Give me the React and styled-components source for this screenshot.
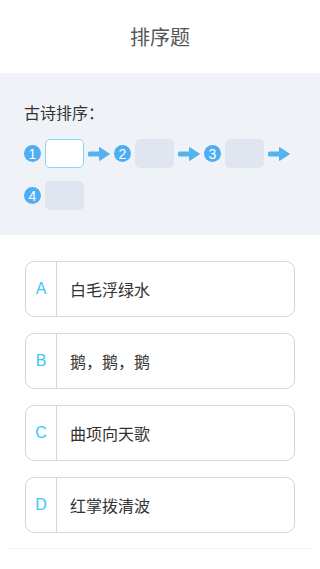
import React from 'react';
import styled, { createGlobalStyle } from 'styled-components';

const GlobalStyle = createGlobalStyle`
  html, body {
    margin: 0;
    padding: 0;
    background: #fff;
    font-family: "Noto Sans CJK SC", "Noto Sans", sans-serif;
  }
`;

const Page = styled.div`
  width: 320px;
  min-height: 569px;
  background: #fff;
`;

const Header = styled.div`
  height: 73px;
  display: flex;
  align-items: center;
  justify-content: center;
  font-size: 20px;
  color: #555;
`;

const Panel = styled.div`
  background: #eff3f8;
  padding: 28px 24px 25px;
`;

const Label = styled.div`
  font-size: 16px;
  line-height: 22px;
  color: #333;
  margin-bottom: 16px;
`;

const Steps = styled.div`
  display: flex;
  flex-wrap: wrap;
  align-items: center;
  column-gap: 4px;
  row-gap: 13px;
`;

const Step = styled.div`
  display: flex;
  align-items: center;
  gap: 4px;
`;

const Num = styled.div`
  flex: 0 0 17px;
  width: 17px;
  height: 17px;
  border-radius: 50%;
  background: #4fadf2;
  color: #fff;
  display: flex;
  align-items: center;
  justify-content: center;
  font-family: "Liberation Sans", sans-serif;
  font-size: 14px;
`;

const Slot = styled.div`
  width: 39px;
  height: 29px;
  box-sizing: border-box;
  border-radius: 5px;
  background: ${p => (p.active ? '#fff' : '#dfe6f0')};
  border: ${p => (p.active ? '1.5px solid #8ad6f4' : 'none')};
`;

const Arrow = () => (
  <svg width="22" height="14" viewBox="0 0 22 14">
    <rect x="0" y="4.5" width="13" height="5" rx="1.5" fill="#56b2ef" />
    <path d="M11.5 0.5 L21.5 7 L11.5 13.5 Z" fill="#56b2ef" stroke="#56b2ef" strokeWidth="1" strokeLinejoin="round" />
  </svg>
);

const Options = styled.div`
  padding: 26px 25px 15px;
  display: flex;
  flex-direction: column;
  gap: 16px;
`;

const Card = styled.div`
  height: 56px;
  box-sizing: border-box;
  border: 1.5px solid #cfd7e3;
  border-radius: 9px;
  display: flex;
  align-items: stretch;
`;

const Letter = styled.div`
  width: 30px;
  border-right: 1px solid #cfd7e3;
  display: flex;
  align-items: center;
  justify-content: center;
  color: #3cc6f6;
  font-family: "Liberation Sans", sans-serif;
  font-size: 16px;
`;

const Text = styled.div`
  display: flex;
  align-items: center;
  padding-left: 13px;
  font-size: 16px;
  color: #333;
`;

const Footer = styled.div`
  margin: 0 10px;
  height: 1px;
  background: #f1f2f4;
`;

const options = [
  ['A', '白毛浮绿水'],
  ['B', '鹅，鹅，鹅'],
  ['C', '曲项向天歌'],
  ['D', '红掌拨清波'],
];

export default function App() {
  const slots = [1, 2, 3, 4];
  return (
    <Page>
      <GlobalStyle />
      <Header>排序题</Header>
      <Panel>
        <Label>古诗排序：</Label>
        <Steps>
          {slots.map(n => (
            <React.Fragment key={n}>
              <Step>
                <Num>{n}</Num>
                <Slot active={n === 1} />
              </Step>
              {n < 4 && <Arrow />}
            </React.Fragment>
          ))}
        </Steps>
      </Panel>
      <Options>
        {options.map(([k, t]) => (
          <Card key={k}>
            <Letter>{k}</Letter>
            <Text>{t}</Text>
          </Card>
        ))}
      </Options>
      <Footer />
    </Page>
  );
}
